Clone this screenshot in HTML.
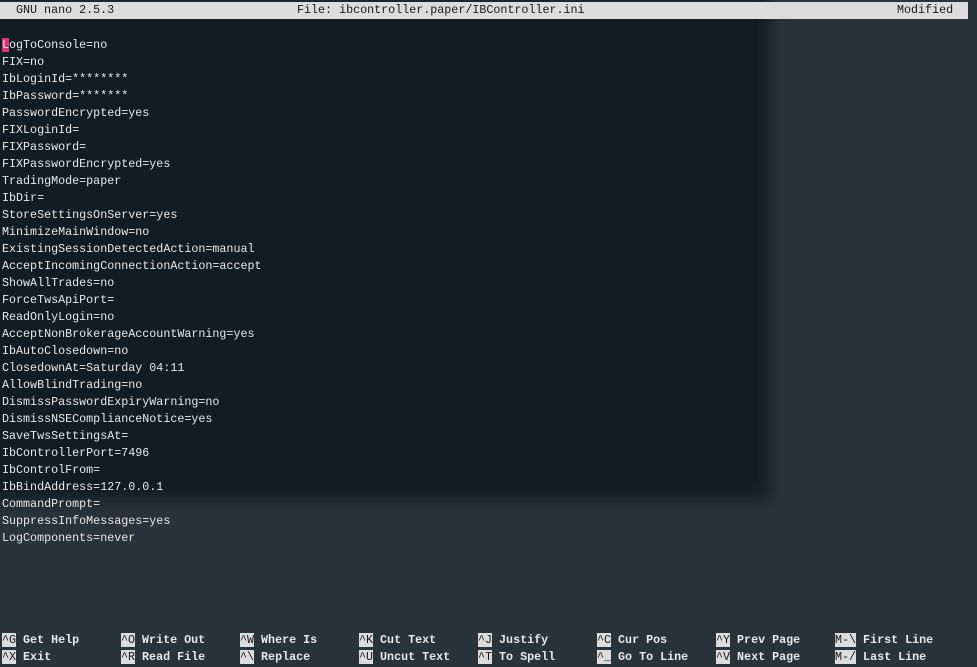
<!DOCTYPE html>
<html><head><style>
body{margin:0;width:977px;height:667px;background:#29333a;overflow:hidden;position:relative;font-family:"Liberation Mono",monospace;font-size:11.7px;color:#e6e8ea}
.dark{position:absolute;left:-30px;top:0;width:800px;height:500px;background:#121c24;filter:blur(8px)}
.top{position:absolute;left:0;top:2px;width:968px;height:17px;background:#dcdcdc;color:#1a1a1a;line-height:17px;white-space:pre}
.top span{position:absolute;top:0}
.txt{position:absolute;left:2px;top:37px;line-height:17px;white-space:pre}
.cur{background:#d6357a}
.sc{position:absolute;line-height:17px;white-space:pre;font-weight:bold;margin:0}
.sc div{height:17px}
.k{background:#dcdcdc;color:#1a1a1a;font-weight:normal}
</style></head><body>
<div class="dark"></div>
<div class="top"><span style="left:16px">GNU nano 2.5.3</span><span style="left:297px">File: ibcontroller.paper/IBController.ini</span><span style="left:897px">Modified</span></div>
<div class="txt"><span class="cur">L</span>ogToConsole=no
FIX=no
IbLoginId=********
IbPassword=*******
PasswordEncrypted=yes
FIXLoginId=
FIXPassword=
FIXPasswordEncrypted=yes
TradingMode=paper
IbDir=
StoreSettingsOnServer=yes
MinimizeMainWindow=no
ExistingSessionDetectedAction=manual
AcceptIncomingConnectionAction=accept
ShowAllTrades=no
ForceTwsApiPort=
ReadOnlyLogin=no
AcceptNonBrokerageAccountWarning=yes
IbAutoClosedown=no
ClosedownAt=Saturday 04:11
AllowBlindTrading=no
DismissPasswordExpiryWarning=no
DismissNSEComplianceNotice=yes
SaveTwsSettingsAt=
IbControllerPort=7496
IbControlFrom=
IbBindAddress=127.0.0.1
CommandPrompt=
SuppressInfoMessages=yes
LogComponents=never</div>
<div class="sc" style="left:2px;top:632px"><div><span class="k">^G</span> Get Help</div><div><span class="k">^X</span> Exit</div></div>
<div class="sc" style="left:121px;top:632px"><div><span class="k">^O</span> Write Out</div><div><span class="k">^R</span> Read File</div></div>
<div class="sc" style="left:240px;top:632px"><div><span class="k">^W</span> Where Is</div><div><span class="k">^\</span> Replace</div></div>
<div class="sc" style="left:359px;top:632px"><div><span class="k">^K</span> Cut Text</div><div><span class="k">^U</span> Uncut Text</div></div>
<div class="sc" style="left:478px;top:632px"><div><span class="k">^J</span> Justify</div><div><span class="k">^T</span> To Spell</div></div>
<div class="sc" style="left:597px;top:632px"><div><span class="k">^C</span> Cur Pos</div><div><span class="k">^_</span> Go To Line</div></div>
<div class="sc" style="left:716px;top:632px"><div><span class="k">^Y</span> Prev Page</div><div><span class="k">^V</span> Next Page</div></div>
<div class="sc" style="left:835px;top:632px"><div><span class="k">M-\</span> First Line</div><div><span class="k">M-/</span> Last Line</div></div>
</body></html>
